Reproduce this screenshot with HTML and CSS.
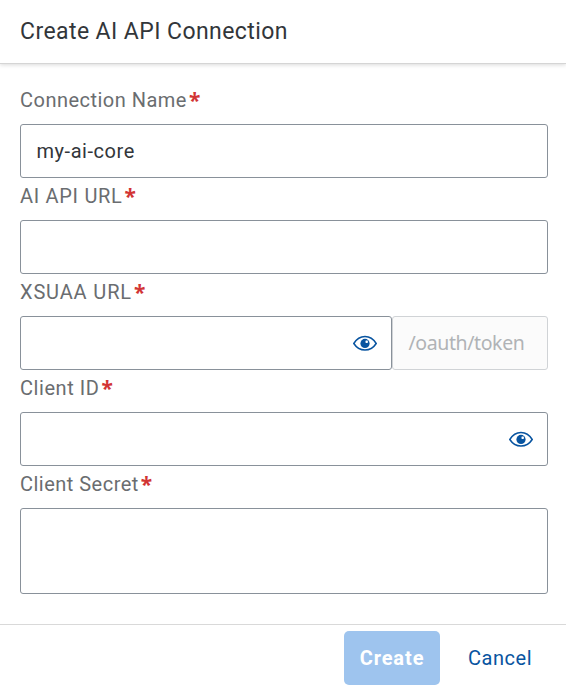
FILE: index.html
```html
<!DOCTYPE html>
<html lang="en">
<head>
<meta charset="utf-8">
<title>Create AI API Connection</title>
<link rel="stylesheet" href="styles.css">
</head>
<body>
<div class="dialog">
  <header class="header"><h1 class="title"><span class="text">Create AI API Connection</span></h1></header>
  <main class="form">
    <div class="label"><span class="text name-label">Connection Name</span><span class="star">*</span></div>
    <div class="field"><span class="text">my-ai-core</span></div>
    <div class="label"><span class="text api-label">AI API URL</span><span class="star">*</span></div>
    <div class="field"></div>
    <div class="label"><span class="text xsuaa-label">XSUAA URL</span><span class="star">*</span></div>
    <div class="row">
      <div class="field grow"><svg class="eye" viewBox="0 0 24 16"><path d="M0.800 8.500C6.500 -0.800 17.500 -0.800 23.200 8.500C17.500 17.300 6.500 17.300 0.800 8.500Z" fill="none" stroke="#0854a0" stroke-width="1.500"/><circle cx="12" cy="8.400" r="4.600" fill="#0854a0"/><rect x="12.500" y="5.500" width="2.400" height="2.400" rx=".6" fill="#fff"/></svg></div>
      <div class="field suffix"><span class="text">/oauth/token</span></div>
    </div>
    <div class="label"><span class="text">Client ID</span><span class="star">*</span></div>
    <div class="field"><svg class="eye" viewBox="0 0 24 16"><path d="M0.800 8.500C6.500 -0.800 17.500 -0.800 23.200 8.500C17.500 17.300 6.500 17.300 0.800 8.500Z" fill="none" stroke="#0854a0" stroke-width="1.500"/><circle cx="12" cy="8.400" r="4.600" fill="#0854a0"/><rect x="12.500" y="5.500" width="2.400" height="2.400" rx=".6" fill="#fff"/></svg></div>
    <div class="label"><span class="text name-label">Client Secret</span><span class="star">*</span></div>
    <div class="field area"></div>
  </main>
  <footer class="footer"><div class="button primary"><span class="text">Create</span></div><div class="button"><span class="text">Cancel</span></div></footer>
</div>
</body>
</html>
```
FILE: styles.css
```css
* { box-sizing: border-box; }
body { margin: 0; background: #fff; font-family: Roboto, "Noto Sans", sans-serif; font-size: 20px; letter-spacing: .55px; color: #32363a; }
.dialog { height: 687px; display: flex; flex-direction: column; overflow: hidden; }
.header { height: 64px; flex: none; padding: 0 20px; border-bottom: 1px solid #d5d5d5; box-shadow: 0 1px 4px rgba(0,0,0,.15); }
.title { margin: 0; font-size: 23px; font-weight: 400; line-height: 64px; letter-spacing: .42px; }
.text { white-space: nowrap; }
.form { flex: 1; padding: 18px 18px 0 20px; }
.label { height: 42px; display: flex; line-height: 37px; color: #6a6d70; }
.name-label { letter-spacing: .48px; }
.api-label { letter-spacing: .7px; }
.xsuaa-label { letter-spacing: .85px; }
.star { color: #d23434; font-family: "Noto Sans", sans-serif; font-size: 21px; font-weight: 700; letter-spacing: 0; margin-left: 2px; line-height: 36px; }
.field { height: 54px; border: 1px solid #89919a; border-radius: 3px; display: flex; align-items: center; padding: 0 15.5px; }
.row { display: flex; }
.grow { flex: 1; }
.eye { width: 24px; height: 16px; margin-left: auto; margin-right: -1.5px; }
.suffix { width: 156px; background: #fbfbfb; border-color: #d0d3d6; color: #b0b3b6; font-family: "Noto Sans", sans-serif; font-size: 19.5px; letter-spacing: -.4px; line-height: 52px; align-items: flex-start; }
.area { height: 86px; }
.footer { height: 63px; flex: none; border-top: 1px solid #d9d9d9; display: flex; justify-content: flex-end; padding: 6px 18px 0 0; gap: 12px; }
.button { height: 54px; width: 96px; border-radius: 5px; display: flex; justify-content: center; align-items: center; color: #0854a0; }
.primary { background: #9ec4ee; color: #fff; font-weight: 700; letter-spacing: .9px; }
```
